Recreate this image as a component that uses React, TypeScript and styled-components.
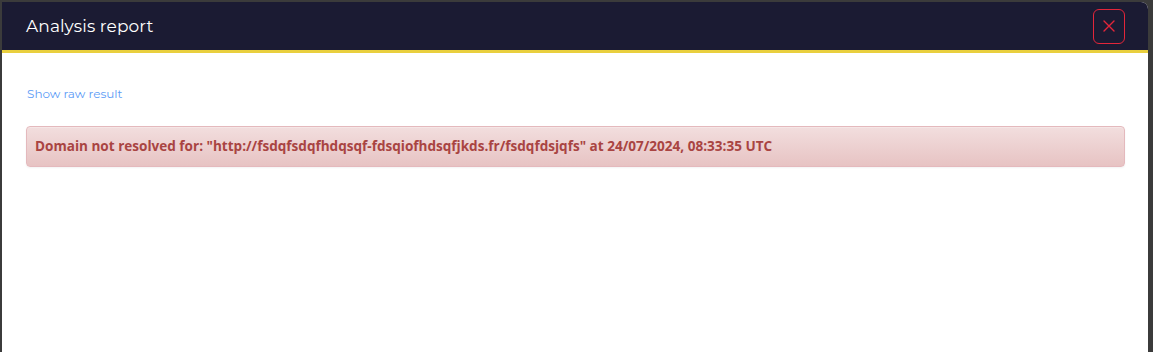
import React from 'react';
import styled, { createGlobalStyle } from 'styled-components';

const GlobalStyle = createGlobalStyle`
  html, body {
    margin: 0;
    padding: 0;
    background: #3b3b3b;
    overflow: hidden;
  }
`;

const Page = styled.div`
  padding: 2px 5px 0 2px;
  height: 352px;
  box-sizing: border-box;
`;

const Modal = styled.div`
  background: #ffffff;
  border-top-right-radius: 7px;
  height: 100%;
  overflow: hidden;
`;

const Header = styled.div`
  display: flex;
  align-items: center;
  justify-content: space-between;
  height: 48px;
  padding: 0 23px 0 24px;
  background: #1b1b33;
  border-bottom: 3px solid #e9cf3e;
`;

const Title = styled.h4`
  margin: 0;
  font-family: 'Montserrat', 'Lato', 'Open Sans', sans-serif;
  font-size: 17px;
  font-weight: 400;
  color: #ffffff;
  letter-spacing: 0.1px;
`;

const CloseButton = styled.button`
  display: flex;
  align-items: center;
  justify-content: center;
  width: 32px;
  height: 35px;
  padding: 0;
  background: transparent;
  border: 1px solid #e3263a;
  border-radius: 6px;
  color: #e3263a;
  cursor: pointer;
`;

const Body = styled.div`
  padding: 31px 23px 0 24px;
`;

const RawLink = styled.a`
  display: inline-block;
  margin-left: 1px;
  font-family: 'Montserrat', 'Lato', 'Open Sans', sans-serif;
  font-size: 12px;
  color: #5d9cf6;
  text-decoration: none;
  cursor: pointer;
`;

const Alert = styled.div`
  margin-top: 24px;
  padding: 11px 8px 12px 8px;
  border: 1px solid #e4b9bd;
  border-radius: 4px;
  background: linear-gradient(to bottom, #f2dede 0%, #e7c3c3 100%);
  box-shadow: inset 0 1px 0 rgba(255, 255, 255, 0.25), 0 1px 2px rgba(0, 0, 0, 0.05);
  font-family: 'Open Sans', 'Liberation Sans', sans-serif;
  font-size: 13.55px;
  font-weight: 700;
  color: #a94442;
  line-height: 16px;
`;

const App = () => (
  <>
    <GlobalStyle />
    <Page>
      <Modal>
        <Header>
          <Title>Analysis report</Title>
          <CloseButton aria-label="Close">
            <svg width="12" height="12" viewBox="0 0 12 12" fill="none" stroke="currentColor" strokeWidth="1.4" strokeLinecap="round">
              <path d="M1 1 L11 11 M11 1 L1 11" />
            </svg>
          </CloseButton>
        </Header>
        <Body>
          <RawLink>Show raw result</RawLink>
          <Alert>
            Domain not resolved for: "http://fsdqfsdqfhdqsqf-fdsqiofhdsqfjkds.fr/fsdqfdsjqfs" at 24/07/2024, 08:33:35 UTC
          </Alert>
        </Body>
      </Modal>
    </Page>
  </>
);

export default App;
